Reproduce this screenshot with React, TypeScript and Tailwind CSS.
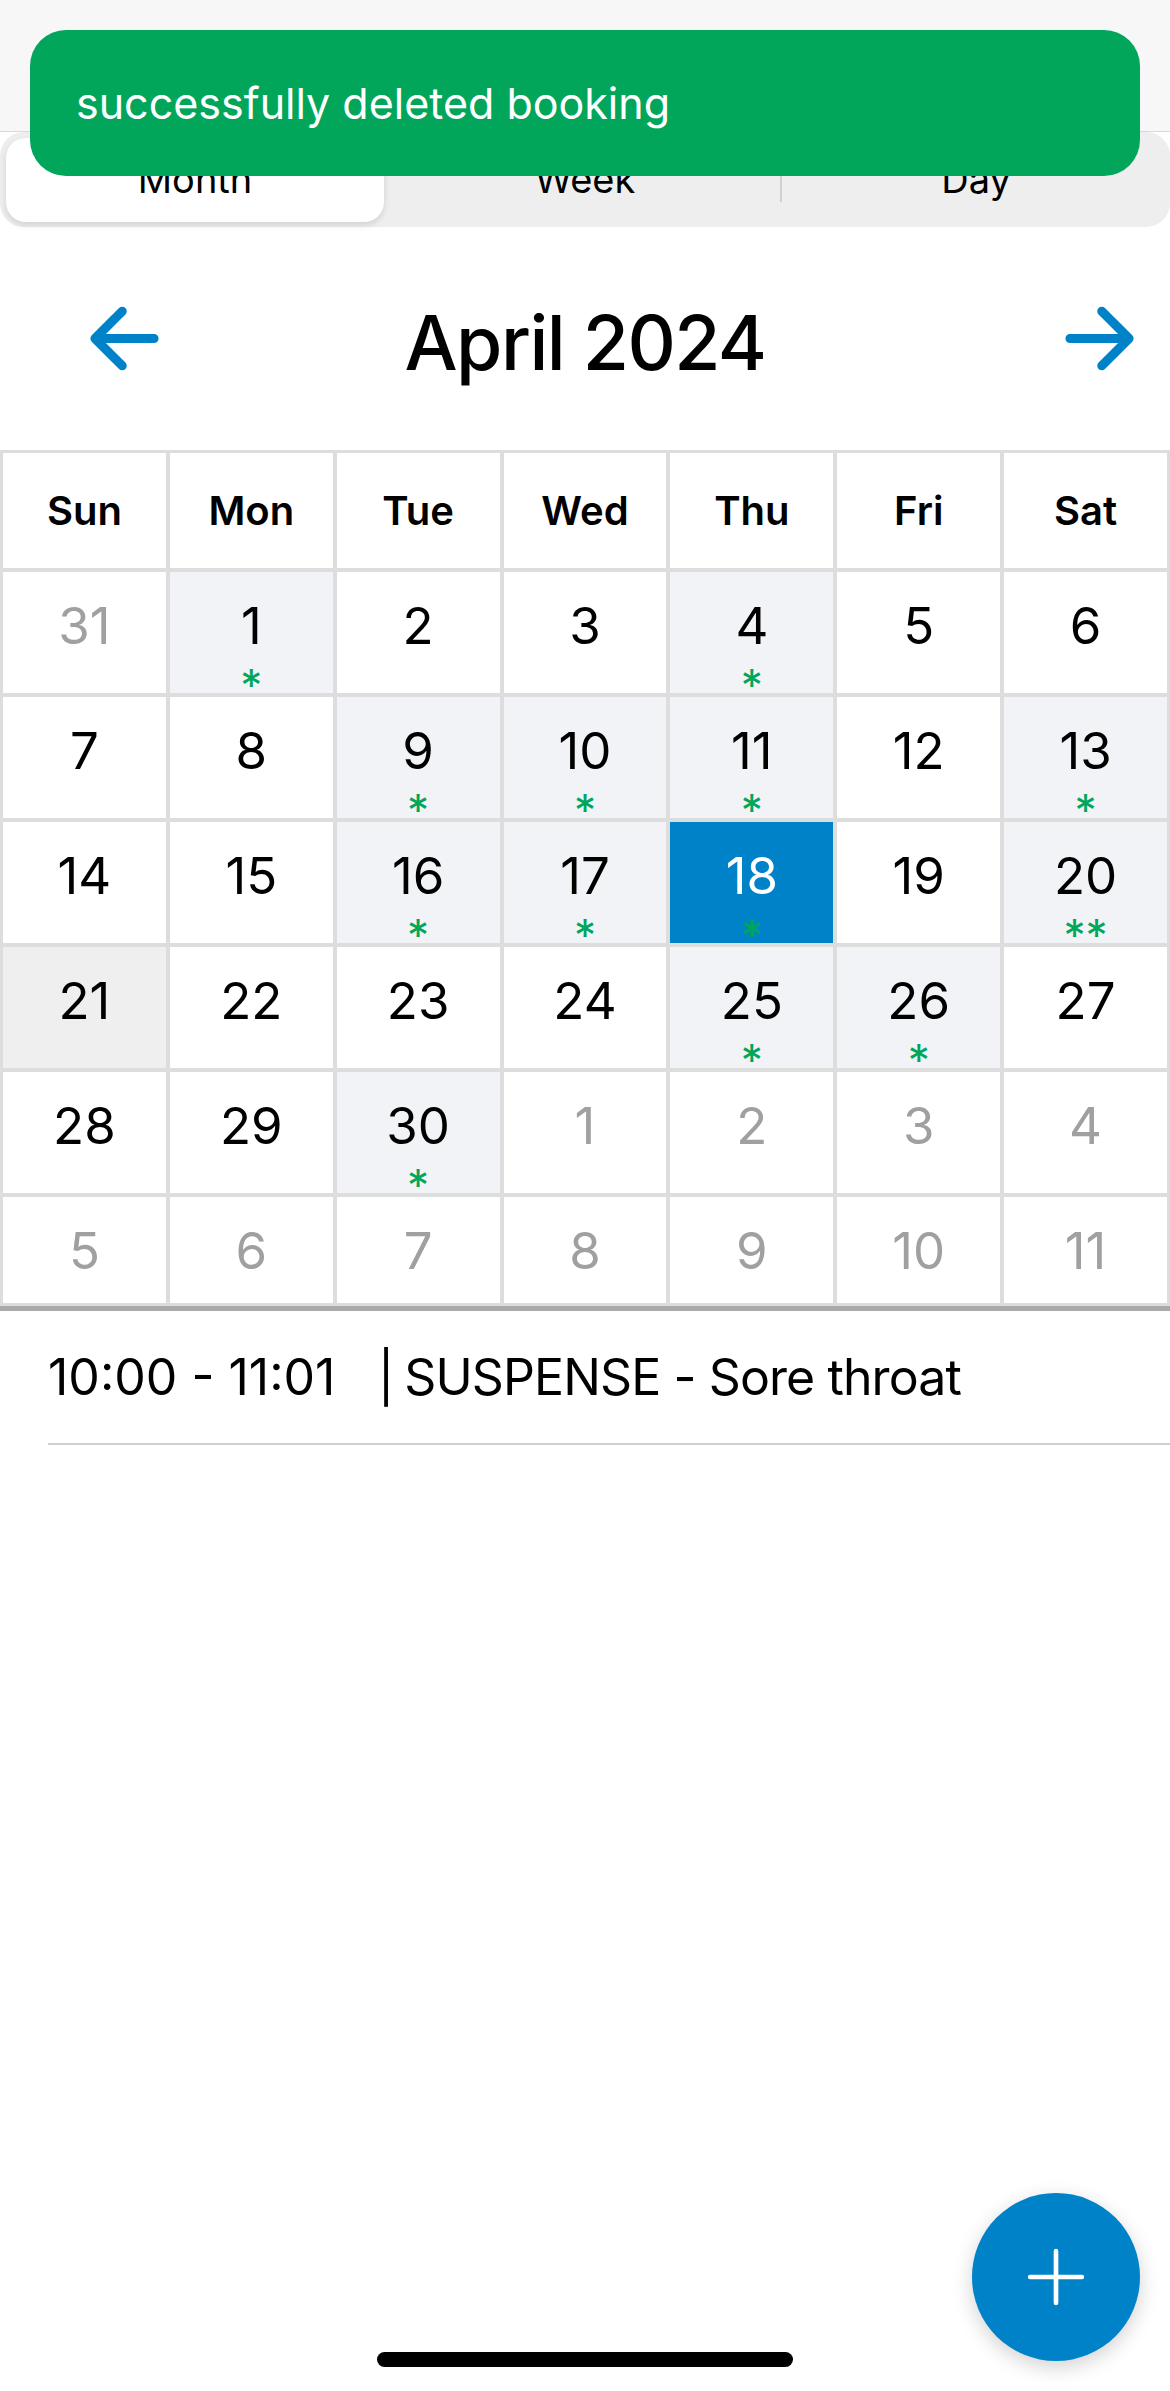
import React from 'react';

type Day = { n: number; out?: boolean; stars?: number; selected?: boolean; pressed?: boolean };

const weeks: Day[][] = [
  [{ n: 31, out: true }, { n: 1, stars: 1 }, { n: 2 }, { n: 3 }, { n: 4, stars: 1 }, { n: 5 }, { n: 6 }],
  [{ n: 7 }, { n: 8 }, { n: 9, stars: 1 }, { n: 10, stars: 1 }, { n: 11, stars: 1 }, { n: 12 }, { n: 13, stars: 1 }],
  [{ n: 14 }, { n: 15 }, { n: 16, stars: 1 }, { n: 17, stars: 1 }, { n: 18, stars: 1, selected: true }, { n: 19 }, { n: 20, stars: 2 }],
  [{ n: 21, pressed: true }, { n: 22 }, { n: 23 }, { n: 24 }, { n: 25, stars: 1 }, { n: 26, stars: 1 }, { n: 27 }],
  [{ n: 28 }, { n: 29 }, { n: 30, stars: 1 }, { n: 1, out: true }, { n: 2, out: true }, { n: 3, out: true }, { n: 4, out: true }],
  [{ n: 5, out: true }, { n: 6, out: true }, { n: 7, out: true }, { n: 8, out: true }, { n: 9, out: true }, { n: 10, out: true }, { n: 11, out: true }],
];

const weekdays = ['Sun', 'Mon', 'Tue', 'Wed', 'Thu', 'Fri', 'Sat'];

function Arrow({ dir }: { dir: 'left' | 'right' }) {
  const d = dir === 'left' ? 'M244 400L100 256l144-144M120 256h292' : 'M268 112l144 144-144 144M392 256H100';
  return (
    <svg width="97" height="97" viewBox="0 0 512 512" className="text-[#0082c8]">
      <path d={d} fill="none" stroke="currentColor" strokeLinecap="round" strokeLinejoin="round" strokeWidth="48" />
    </svg>
  );
}

function DayCell({ day, last }: { day: Day; last: boolean }) {
  let bg = 'bg-white';
  if (day.selected) bg = 'bg-[#0082c8]';
  else if (day.pressed) bg = 'bg-[#efefef]';
  else if (day.stars) bg = 'bg-[#f2f3f7]';
  const color = day.selected ? 'text-white' : day.out ? 'text-[#a0a0a0]' : 'text-black';
  return (
    <div className={`${bg} ${last ? 'h-[106px]' : 'h-[121px]'} flex flex-col items-center pt-[28px]`}>
      <span className={`${color} text-[51px] leading-none`}>{day.n}</span>
      {day.stars ? (
        <span className="mt-[26px] h-[16px] text-[44px] leading-[16px] text-[#00a65a]">{'*'.repeat(day.stars)}</span>
      ) : null}
    </div>
  );
}

export default function App() {
  return (
    <div className="relative w-[1170px] h-[2391px] overflow-hidden bg-white font-['Inter',sans-serif] text-black">
      <div className="h-[132px] bg-[#f7f7f7] border-b border-[#d9d9d9]" />

      <div className="flex h-[95px] bg-[#eeeeee] rounded-[24px]">
        <div className="w-[390px] flex items-center pl-[6px]">
          <div className="w-[378px] h-[84px] bg-white rounded-[20px] shadow-[0_3px_6px_rgba(0,0,0,0.12)] flex items-center justify-center text-[38px]">
            Month
          </div>
        </div>
        <div className="w-[390px] flex items-center justify-center text-[38px]">Week</div>
        <div className="w-[2px] self-center h-[44px] bg-[#d0d0d0]" />
        <div className="flex-1 flex items-center justify-center text-[38px]">Day</div>
      </div>

      <div className="h-[223px] grid grid-cols-[1fr_auto_1fr] items-center">
        <div className="ml-[76px]">
          <Arrow dir="left" />
        </div>
        <div className="pt-[8px] text-[75px] font-medium tracking-[-0.02em] leading-none">April 2024</div>
        <div className="justify-self-end mr-[22px]">
          <Arrow dir="right" />
        </div>
      </div>

      <div className="border-[3px] border-[#dddddd] bg-[#dddddd] grid grid-cols-7 gap-x-[4px] gap-y-[4px]">
        {weekdays.map((w) => (
          <div key={w} className="h-[115px] bg-white flex items-center justify-center text-[40px] font-semibold">
            {w}
          </div>
        ))}
        {weeks.map((week, wi) =>
          week.map((day, di) => <DayCell key={`${wi}-${di}`} day={day} last={wi === weeks.length - 1} />),
        )}
      </div>
      <div className="h-[5px] bg-[#aaaaaa]" />

      <div className="ml-[48px] pt-[41px] pb-[41px] border-b-2 border-[#d0d0d0]">
        <div className="text-[50px] leading-none whitespace-pre">
          {'10:00 - 11:01   |'}
          <span className="tracking-[-4px]">{' '}</span>
          <span className="tracking-[-0.9px]">{'SUSPENSE - Sore throat'}</span>
        </div>
      </div>

      <div className="absolute left-[30px] top-[30px] w-[1110px] h-[146px] rounded-[36px] bg-[#02a65b] flex items-center pl-[46px]">
        <span className="text-white text-[43px]">successfully deleted booking</span>
      </div>

      <button className="absolute left-[972px] top-[2193px] w-[168px] h-[168px] rounded-full bg-[#0082c8] shadow-[0_6px_20px_rgba(0,0,0,0.18)] flex items-center justify-center">
        <svg width="92" height="92" viewBox="0 0 512 512" className="text-white">
          <path d="M256 112v288M400 256H112" fill="none" stroke="currentColor" strokeLinecap="round" strokeLinejoin="round" strokeWidth="26" />
        </svg>
      </button>

      <div className="absolute left-[377px] top-[2352px] w-[416px] h-[15px] rounded-full bg-black" />
    </div>
  );
}
